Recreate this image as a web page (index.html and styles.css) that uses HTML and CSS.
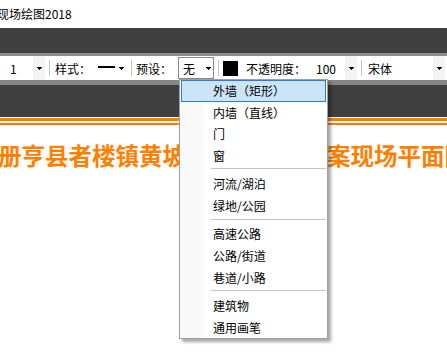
FILE: index.html
```html
<!DOCTYPE html>
<html lang="zh-CN">
<head>
    <meta charset="UTF-8">
    <meta name="viewport" content="width=device-width, initial-scale=1.0">
    <title>现场绘图2018</title>
    <link rel="stylesheet" href="styles.css">
</head>
<body>
    <div class="title-bar"><span class="app-name">现场绘图2018</span></div>
    <div class="ribbon"></div>

    <div class="toolbar">
        <div class="num-field">1</div>
        <div class="drop-btn">
            <svg class="arrow" width="5" height="3" viewBox="0 0 5 3"><path d="M0 0h5v1H0zM1 1h3v1H1zM2 2h1v1H2z"/></svg>
        </div>
        <div class="tool-sep"></div>
        <span class="tool-label">样式：</span>
        <div class="line-sample"></div>
        <svg class="arrow line-arrow" width="5" height="3" viewBox="0 0 5 3"><path d="M0 0h5v1H0zM1 1h3v1H1zM2 2h1v1H2z"/></svg>
        <div class="tool-sep sep-after-line"></div>
        <span class="tool-label">预设：</span>

        <div class="combo">
            <span class="combo-value">无</span>
            <svg class="arrow" width="5" height="3" viewBox="0 0 5 3"><path d="M0 0h5v1H0zM1 1h3v1H1zM2 2h1v1H2z"/></svg>

            <div class="preset-menu">
                <div class="menu-item active">外墙（矩形）</div>
                <div class="menu-item">内墙（直线）</div>
                <div class="menu-item">门</div>
                <div class="menu-item">窗</div>
                <div class="menu-sep"></div>
                <div class="menu-item">河流/湖泊</div>
                <div class="menu-item">绿地/公园</div>
                <div class="menu-sep"></div>
                <div class="menu-item">高速公路</div>
                <div class="menu-item">公路/街道</div>
                <div class="menu-item">巷道/小路</div>
                <div class="menu-sep"></div>
                <div class="menu-item">建筑物</div>
                <div class="menu-item">通用画笔</div>
            </div>
        </div>

        <div class="tool-sep sep-after-combo"></div>
        <div class="color-swatch"></div>
        <span class="tool-label opacity-label">不透明度：</span>
        <div class="opacity-value">100</div>
        <div class="drop-btn">
            <svg class="arrow" width="5" height="3" viewBox="0 0 5 3"><path d="M0 0h5v1H0zM1 1h3v1H1zM2 2h1v1H2z"/></svg>
        </div>
        <div class="tool-sep sep-after-opacity"></div>
        <div class="font-value">宋体</div>
        <div class="drop-btn">
            <svg class="arrow" width="5" height="3" viewBox="0 0 5 3"><path d="M0 0h5v1H0zM1 1h3v1H1zM2 2h1v1H2z"/></svg>
        </div>
    </div>

    <div class="canvas-head"></div>
    <div class="paper">
        <div class="rule-thick"></div>
        <div class="rule-thin"></div>
        <h1 class="plan-title">册亨县者楼镇黄坡村某某家被盗案现场平面图</h1>
    </div>
</body>
</html>
```

FILE: styles.css
```css
html {
    overflow: hidden;
    background: #ffffff;
}
body {
    margin: 0;
    padding: 0;
    min-height: 352px;
    font-family: "Noto Sans CJK SC", "Liberation Sans", sans-serif;
    font-size: 12px;
    color: #000000;
}
.title-bar {
    height: 28px;
    line-height: 28px;
    background: #ffffff;
    white-space: nowrap;
}
.app-name {
    margin-left: -3px;
}
.ribbon {
    height: 25px;
    background: #404040;
}
.toolbar {
    display: flex;
    align-items: center;
    height: 24px;
    background: #ffffff;
    border-top: 3px solid #8c8c8c;
    border-bottom: 5px solid #868686;
}
.arrow {
    display: block;
    shape-rendering: crispEdges;
}
.num-field {
    width: 23px;
    padding-left: 10px;
}
.drop-btn {
    display: flex;
    align-items: center;
    justify-content: center;
    width: 12px;
    height: 24px;
    background: #f4f4f4;
}
.tool-sep {
    width: 1px;
    height: 16px;
    background: #c6c6c6;
    margin: 0 5px 0 4px;
}
.tool-label {
    white-space: nowrap;
}
.line-sample {
    width: 17px;
    height: 2px;
    background: #000000;
    margin: 0 0 3px 7px;
}
.line-arrow {
    margin-left: 4px;
}
.sep-after-line {
    margin: 0 4px 0 7px;
}
.combo {
    position: relative;
    display: flex;
    align-items: center;
    justify-content: space-between;
    box-sizing: border-box;
    width: 36px;
    height: 22px;
    margin-left: 6px;
    padding: 0 2px 0 4px;
    border: 1px solid #8a8a8a;
}
.preset-menu {
    position: absolute;
    left: 0;
    top: 21px;
    z-index: 10;
    box-sizing: border-box;
    width: 149px;
    padding: 0 1px;
    background: linear-gradient(to right, #f9f9f9 24px, #ffffff 24px);
    border: 1px solid #a0a0a0;
    box-shadow: 3px 3px 3px rgba(0, 0, 0, 0.35);
}
.menu-item {
    box-sizing: border-box;
    height: 21.7px;
    line-height: 19.7px;
    padding-left: 31px;
    border: 1px solid transparent;
    white-space: nowrap;
}
.menu-item.active {
    background: #cce4f7;
    border-color: #2a80d8;
}
.menu-sep {
    height: 6.6px;
    margin-left: 30px;
    background: linear-gradient(#ffffff 1.5px, #c4c4c4 1.5px, #c4c4c4 2.5px, #ffffff 2.5px);
}
.sep-after-combo {
    margin: 0 4px 0 4px;
}
.color-swatch {
    width: 15px;
    height: 15px;
    background: #000000;
}
.opacity-label {
    margin-left: 8px;
}
.opacity-value {
    width: 29px;
    padding-left: 10px;
}
.sep-after-opacity {
    margin: 0 6px 0 4px;
}
.font-value {
    width: 65px;
}
.canvas-head {
    height: 32px;
    background: #404040;
}
.paper {
    padding-top: 1px;
    background: #ffffff;
}
.rule-thick {
    height: 3px;
    background: #ff8000;
}
.rule-thin {
    height: 2px;
    margin-top: 2px;
    background: #ff8000;
}
.plan-title {
    margin: 15px 0 0 -2px;
    font-size: 23.5px;
    line-height: 30px;
    font-weight: bold;
    color: #ff8000;
    white-space: nowrap;
}
```
